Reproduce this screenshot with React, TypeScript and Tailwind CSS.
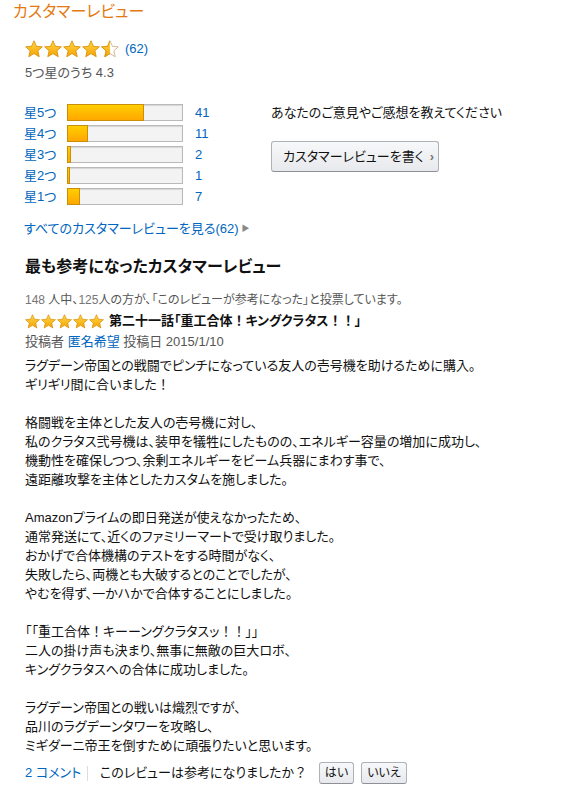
import React from "react";

type StarKind = "full" | "half" | "empty";

const STAR_PTS = "10,0.9 12.7,7 19.3,7.6 14.3,12 15.8,18.6 10,15.1 4.2,18.6 5.7,12 0.7,7.6 7.3,7";

function Star({ kind, size, id }: { kind: StarKind; size: number; id: string }) {
  return (
    <svg width={size} height={size} viewBox="0 0 20 20" className="block shrink-0">
      <defs>
        <linearGradient id={`g-${id}`} x1="0" y1="0" x2="0" y2="1">
          <stop offset="0" stopColor="#ffd84a" />
          <stop offset="1" stopColor="#f5a300" />
        </linearGradient>
        <clipPath id={`c-${id}`}>
          <rect x="0" y="0" width="10" height="20" />
        </clipPath>
      </defs>
      {kind === "full" && (
        <polygon points={STAR_PTS} fill={`url(#g-${id})`} stroke="#d98a00" strokeWidth="0.9" strokeLinejoin="round" />
      )}
      {kind === "half" && (
        <>
          <polygon points={STAR_PTS} fill="#fff" stroke="#c9ab78" strokeWidth="0.9" strokeLinejoin="round" />
          <polygon points={STAR_PTS} fill={`url(#g-${id})`} stroke="#d98a00" strokeWidth="0.9" strokeLinejoin="round" clipPath={`url(#c-${id})`} />
        </>
      )}
      {kind === "empty" && (
        <polygon points={STAR_PTS} fill="#fff" stroke="#c9ab78" strokeWidth="0.9" strokeLinejoin="round" />
      )}
    </svg>
  );
}

function JP({ text }: { text: string }) {
  const parts = text.split(/([！？])/);
  return (
    <>
      {parts.map((p, i) =>
        p === "！" || p === "？" ? (
          <span key={i} className="[font-feature-settings:normal]">{p}</span>
        ) : (
          <React.Fragment key={i}>{p}</React.Fragment>
        )
      )}
    </>
  );
}

const hist = [
  { label: "星5つ", count: 41 },
  { label: "星4つ", count: 11 },
  { label: "星3つ", count: 2 },
  { label: "星2つ", count: 1 },
  { label: "星1つ", count: 7 },
];

const body: string[] = [
  "ラグデーン帝国との戦闘でピンチになっている友人の壱号機を助けるために購入。",
  "ギリギリ間に合いました！",
  "",
  "格闘戦を主体とした友人の壱号機に対し、",
  "私のクラタス弐号機は、装甲を犠牲にしたものの、エネルギー容量の増加に成功し、",
  "機動性を確保しつつ、余剰エネルギーをビーム兵器にまわす事で、",
  "遠距離攻撃を主体としたカスタムを施しました。",
  "",
  "Amazonプライムの即日発送が使えなかったため、",
  "通常発送にて、近くのファミリーマートで受け取りました。",
  "おかげで合体機構のテストをする時間がなく、",
  "失敗したら、両機とも大破するとのことでしたが、",
  "やむを得ず、一かハかで合体することにしました。",
  "",
  "「「重工合体！キーーングクラタスッ！！」」",
  "二人の掛け声も決まり、無事に無敵の巨大ロボ、",
  "キングクラタスへの合体に成功しました。",
  "",
  "ラグデーン帝国との戦いは熾烈ですが、",
  "品川のラグデーンタワーを攻略し、",
  "ミギダーニ帝王を倒すために頑張りたいと思います。",
];

const btn =
  "rounded-[3px] border border-[#adb1b8] border-b-[#8d9096] bg-gradient-to-b from-[#f7f8fa] to-[#e7e9ec] text-[#111]";

export default function App() {
  return (
    <div
      className="w-[584px] h-[807px] bg-white pl-[13px] text-[#111] [font-feature-settings:'palt']"
      style={{ fontFamily: '"Liberation Sans", Arial, "Noto Sans CJK JP", sans-serif' }}
    >
      <h2 className="text-[16px] leading-[24px] text-[#e47911] font-normal">カスタマーレビュー</h2>

      <div className="ml-[12px]">
        <div className="mt-[16px] flex items-center h-[18px]">
          <div className="flex gap-[1px]">
            <Star kind="full" size={18} id="a1" />
            <Star kind="full" size={18} id="a2" />
            <Star kind="full" size={18} id="a3" />
            <Star kind="full" size={18} id="a4" />
            <Star kind="half" size={18} id="a5" />
          </div>
          <span className="ml-[6px] text-[13px] text-[#0066c0]">(62)</span>
        </div>
        <div className="mt-[6px] text-[13px] leading-[18px] text-[#555]">5つ星のうち 4.3</div>

        <div className="mt-[20px] flex">
          <div className="w-[246px] flex flex-col">
            {hist.map((h) => (
              <div key={h.label} className="h-[21px] flex items-center">
                <span className="w-[43px] text-[13px] text-[#0066c0] -ml-[1px]">{h.label}</span>
                <div className="w-[116px] h-[17px] border border-[#b9b9b9] bg-[#f3f3f3] shadow-[inset_0_1px_1px_rgba(0,0,0,0.12)] relative">
                  {h.count > 0 && (
                    <div
                      className="absolute left-[-1px] top-[-1px] bottom-[-1px] bg-gradient-to-b from-[#ffce00] to-[#ffa700] border border-[#c98f08]"
                      style={{ width: `${Math.max(3, Math.round((h.count / 62) * 116))}px` }}
                    />
                  )}
                </div>
                <span className="ml-[12px] text-[13px] text-[#0066c0]">{h.count}</span>
              </div>
            ))}
          </div>
          <div className="flex flex-col">
            <div className="h-[21px] flex items-center text-[13px] text-[#111]">あなたのご意見やご感想を教えてください</div>
            <button className={`mt-[18px] w-[168px] h-[31px] text-[13px] flex items-center pl-[11px] ${btn}`}>
              <span>カスタマーレビューを書く</span>
              <span className="ml-[6px] text-[#777] text-[13px] font-bold">›</span>
            </button>
          </div>
        </div>

        <div className="mt-[13px] h-[18px] flex items-center text-[13px] text-[#0066c0] -ml-[1px]">
          すべてのカスタマーレビューを見る(62)
          <span className="ml-[3px] text-[#888] text-[8px]">▶</span>
        </div>

        <h3 className="mt-[18px] text-[16px] leading-[22px] font-bold text-[#111]">最も参考になったカスタマーレビュー</h3>

        <div className="mt-[14px] text-[12px] leading-[16px] text-[#555]">
          <span className="text-[#767676]">148</span> 人中、<span className="text-[#767676]">125</span>人の方が、「このレビューが参考になった」と投票しています。
        </div>

        <div className="mt-[4px] h-[18px] flex items-center">
          <div className="flex gap-[1px]">
            <Star kind="full" size={15} id="b1" />
            <Star kind="full" size={15} id="b2" />
            <Star kind="full" size={15} id="b3" />
            <Star kind="full" size={15} id="b4" />
            <Star kind="full" size={15} id="b5" />
          </div>
          <span className="ml-[5px] text-[13px] font-bold text-[#111]">
            <JP text="第二十一話「重工合体！キングクラタス！！」" />
          </span>
        </div>

        <div className="mt-[3px] text-[13px] leading-[18px] text-[#555]">
          投稿者 <span className="text-[#0066c0]">匿名希望</span> 投稿日 2015/1/10
        </div>

        <div className="mt-[5px] text-[13px] leading-[19px] text-[#111]">
          {body.map((l, i) => (
            <div key={i} className="h-[19px] whitespace-nowrap">
              <JP text={l} />
            </div>
          ))}
        </div>

        <div className="mt-[7px] h-[22px] flex items-center text-[13px]">
          <span className="w-[62px] text-[#0066c0]">2 コメント</span>
          <span className="w-px h-[15px] bg-[#ddd]" />
          <span className="ml-[12px] text-[#111]">
            <JP text="このレビューは参考になりましたか？" />
          </span>
          <button className={`ml-[12px] w-[35px] h-[22px] text-[12px] ${btn}`}>はい</button>
          <button className={`ml-[7px] w-[46px] h-[22px] text-[12px] ${btn}`}>いいえ</button>
        </div>
      </div>
    </div>
  );
}
